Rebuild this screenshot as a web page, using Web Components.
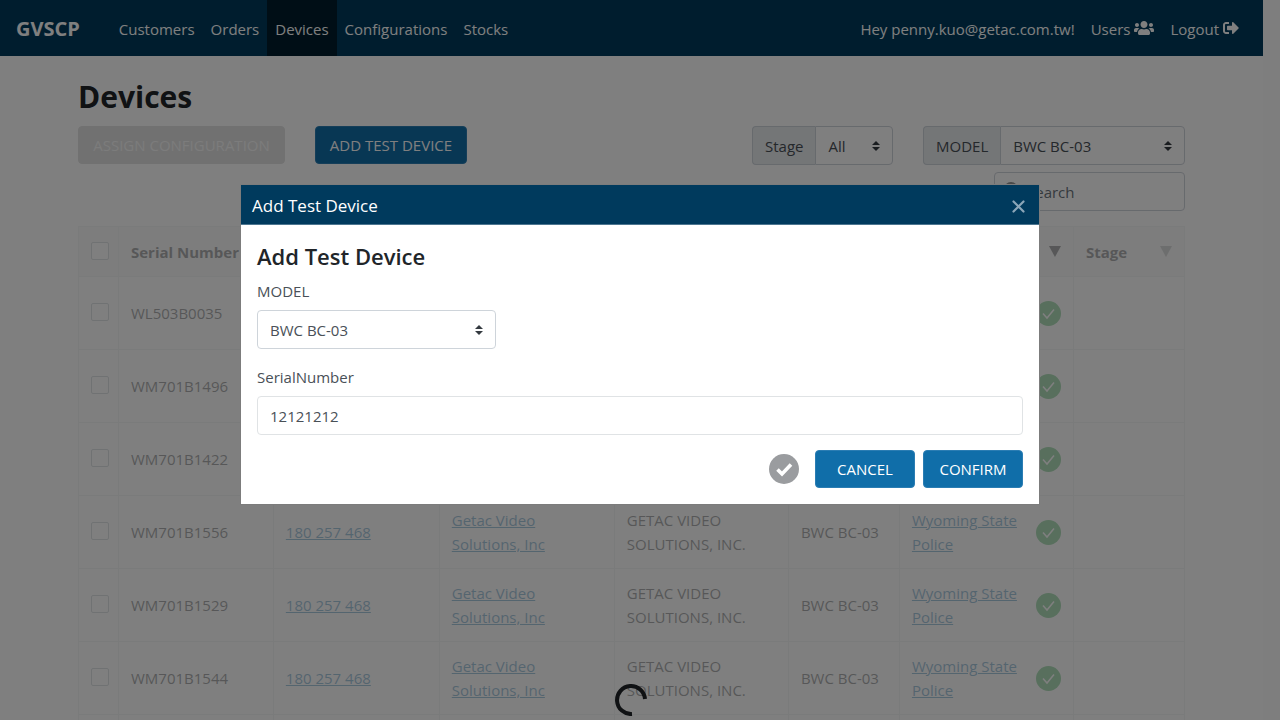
<!DOCTYPE html>
<html lang="en">
<head>
<meta charset="utf-8">
<title>GVSCP - Devices</title>
<style>
  html, body { margin: 0; height: 100%; overflow: hidden; }
  body {
    font: 15px/24px "Open Sans", "Noto Sans", sans-serif;
    color: #495057;
    background: #fff;
  }
</style>
</head>
<body>
<gv-app></gv-app>

<script>
const define = (name, html, setup) => {
  const template = document.createElement('template');
  template.innerHTML = '<style>*,*::before,*::after{box-sizing:border-box}</style>' + html;
  customElements.define(name, class extends HTMLElement {
    connectedCallback() {
      if (this.shadowRoot) return;
      const root = this.attachShadow({ mode: 'open' });
      root.append(template.content.cloneNode(true));
      if (setup) setup(this, root);
    }
  });
};

define('gv-nav-link', `
  <style>
    :host { display: flex; }
    a { display: flex; align-items: center; gap: 4px; padding: 2px 8px 0; color: #fff; text-decoration: none; white-space: nowrap; }
    :host([active]) a { background: #001c2c; }
  </style>
  <a href="#"><slot></slot></a>`);

define('gv-navbar', `
  <style>
    :host { display: block; }
    header { display: flex; height: 56px; padding: 0 16px; background: #003a5d; color: #fff; }
    .brand { display: flex; align-items: center; padding-top: 2px; margin-right: 31px; font-size: 20px; font-weight: 700; color: #fff; text-decoration: none; }
    nav { display: flex; }
    .right { margin-left: auto; }
    .hey { display: flex; align-items: center; padding: 2px 8px 0; }
    svg { display: block; fill: #fff; margin-top: -2px; }
  </style>
  <header>
    <a class="brand" href="#">GVSCP</a>
    <nav>
      <gv-nav-link>Customers</gv-nav-link>
      <gv-nav-link>Orders</gv-nav-link>
      <gv-nav-link active>Devices</gv-nav-link>
      <gv-nav-link>Configurations</gv-nav-link>
      <gv-nav-link>Stocks</gv-nav-link>
    </nav>
    <nav class="right">
      <span class="hey">Hey penny.kuo@getac.com.tw!</span>
      <gv-nav-link>Users
        <svg width="20" height="16" viewBox="0 0 640 512"><path d="M96 224c35.300 0 64-28.700 64-64s-28.700-64-64-64-64 28.700-64 64 28.700 64 64 64zm448 0c35.300 0 64-28.700 64-64s-28.700-64-64-64-64 28.700-64 64 28.700 64 64 64zm32 32h-64c-17.600 0-33.500 7.100-45.100 18.600 40.300 22.100 68.900 62 75.100 109.400h66c17.700 0 32-14.300 32-32v-32c0-35.300-28.700-64-64-64zm-256 0c61.900 0 112-50.100 112-112S381.900 32 320 32 208 82.100 208 144s50.100 112 112 112zm76.800 32h-8.300c-20.800 10-43.900 16-68.500 16s-47.600-6-68.500-16h-8.300C179.600 288 128 339.600 128 403.200V432c0 26.500 21.500 48 48 48h288c26.500 0 48-21.500 48-48v-28.800c0-63.600-51.600-115.200-115.200-115.200zm-223.700-13.400C161.500 263.100 145.600 256 128 256H64c-35.300 0-64 28.700-64 64v32c0 17.700 14.300 32 32 32h65.900c6.300-47.400 34.900-87.300 75.200-109.400z"/></svg>
      </gv-nav-link>
      <gv-nav-link>Logout
        <svg width="16" height="16" viewBox="0 0 512 512"><path d="M497 273L329 441c-15 15-41 4.500-41-17v-96H152c-13.300 0-24-10.700-24-24v-96c0-13.300 10.700-24 24-24h136V88c0-21.400 25.900-32 41-17l168 168c9.300 9.400 9.300 24.600 0 34zM192 436v-40c0-6.600-5.400-12-12-12H96c-17.700 0-32-14.300-32-32V160c0-17.700 14.300-32 32-32h84c6.600 0 12-5.400 12-12V76c0-6.600-5.400-12-12-12H96c-53 0-96 43-96 96v192c0 53 43 96 96 96h84c6.600 0 12-5.400 12-12z"/></svg>
      </gv-nav-link>
    </nav>
  </header>`);

define('gv-button', `
  <style>
    :host { display: block; }
    button { width: 100%; height: 38px; padding: 0 11px; border: 1px solid #2b7db3; border-radius: 4px; background: #106ea9; color: #fff; font: inherit; white-space: nowrap; }
    button:disabled { background: #e2e2e2; border-color: #e2e2e2; color: #f8f8f8; }
  </style>
  <button type="button"><slot></slot></button>`, (host, root) => {
    root.querySelector('button').disabled = host.hasAttribute('disabled');
  });

define('gv-select', `
  <style>
    :host { display: flex; height: 39px; }
    label { display: flex; align-items: center; padding: 0 12px; border: 1px solid #ced4da; border-right: 0; border-radius: 4px 0 0 4px; background: #e9ecef; }
    label:empty { display: none; }
    select {
      flex: 1; min-width: 0; appearance: none; padding: 0 28px 0 12px; border: 1px solid #ced4da; border-radius: 4px;
      font: inherit; color: #495057;
      background: #fff url("data:image/svg+xml,%3csvg xmlns='http://www.w3.org/2000/svg' viewBox='0 0 4 5'%3e%3cpath fill='%23343a40' d='M2 0L0 2h4zm0 5L0 3h4z'/%3e%3c/svg%3e") no-repeat right 12px center / 8px 10px;
    }
    label:not(:empty) + select { border-radius: 0 4px 4px 0; }
  </style>
  <label for="s"></label><select id="s"><option></option></select>`, (host, root) => {
    const text = host.getAttribute('label');
    if (text) root.querySelector('label').textContent = text;
    else root.querySelector('select').setAttribute('aria-label', host.getAttribute('name'));
    root.querySelector('option').textContent = host.getAttribute('value');
  });

define('gv-search', `
  <style>
    :host { display: grid; height: 39px; }
    input { grid-area: 1 / 1; width: 100%; min-width: 0; border: 1px solid #ced4da; border-radius: 4px; padding: 0 12px 0 32px; background: none; font: inherit; color: #495057; }
    input::placeholder { color: #6c757d; opacity: 1; }
    svg { grid-area: 1 / 1; align-self: center; margin: 0 0 2px 10px; }
  </style>
  <svg width="18" height="18" viewBox="0 0 18 18" fill="none" stroke="#909090" stroke-width="2"><circle cx="7" cy="7" r="6"/><path d="M11 11l6 6"/></svg>
  <input type="search" placeholder="Search" aria-label="Search">`);

define('gv-toolbar', `
  <style>
    :host { display: block; }
    .row { display: flex; gap: 30px; align-items: flex-start; }
    .spacer { flex: 1; }
    .add { width: 152px; } .assign { width: 207px; }
    .stage { width: 141px; } .model { width: 262px; }
    .find { width: 191px; margin: 7px 0 0 auto; }
  </style>
  <div class="row">
    <gv-button class="assign" disabled>ASSIGN CONFIGURATION</gv-button>
    <gv-button class="add">ADD TEST DEVICE</gv-button>
    <span class="spacer"></span>
    <gv-select class="stage" label="Stage" value="All"></gv-select>
    <gv-select class="model" label="MODEL" value="BWC BC-03"></gv-select>
  </div>
  <gv-search class="find"></gv-search>`);

define('gv-status', `
  <style>:host { display: block; flex: none; } svg { display: block; }</style>
  <svg width="25" height="25" viewBox="0 0 25 25"><circle cx="12.500" cy="12.500" r="12.500" fill="#28a745"/><path d="M7 12.500l4 4.500 7-8.500" fill="none" stroke="#fff" stroke-width="1.500"/></svg>`);

define('gv-device-table', `
  <style>
    :host { display: block; opacity: .36; }
    table { width: 100%; table-layout: fixed; border-collapse: collapse; color: #212529; }
    th, td { border: 1px solid #e6e8ea; padding: 0 12px; text-align: left; vertical-align: middle; }
    tr { height: 73px; }
    thead tr { height: 50px; background: #f2f2f2; }
    th { font-weight: 700; white-space: nowrap; }
    a { color: #106ea9; text-decoration: underline; }
    input { appearance: none; display: block; width: 18px; height: 18px; margin: 0 0 2px; border: 1px solid #adb5bd; border-radius: 2px; background: #fff; }
    .split { display: flex; align-items: center; justify-content: space-between; }
    .split gv-status { margin-left: auto; }
    .sort { width: 12px; height: 11px; background: #212529; clip-path: polygon(0 0, 100% 0, 50% 100%); margin-left: auto; }
    .idle { opacity: .4; }
  </style>
  <table>
    <colgroup>
      <col style="width:40px"><col style="width:14%"><col style="width:15%"><col style="width:175px">
      <col style="width:174px"><col style="width:111px"><col style="width:174px"><col style="width:111px">
    </colgroup>
    <thead><tr>
      <th><input type="checkbox" aria-label="Select all"></th><th>Serial Number</th><th></th><th></th><th></th><th></th>
      <th><div class="sort"></div></th><th><div class="split">Stage<div class="sort idle"></div></div></th>
    </tr></thead>
    <tbody></tbody>
  </table>`, (host, root) => {
    const full = ['<a href="#">180 257 468</a>', '<a href="#">Getac Video Solutions, Inc</a>', 'GETAC VIDEO SOLUTIONS, INC.', 'BWC BC-03', '<a href="#">Wyoming State Police</a>'];
    const blank = ['', '', '', '', ''];
    const rows = [
      ['WL503B0035', blank], ['WM701B1496', blank], ['WM701B1422', blank],
      ['WM701B1556', full], ['WM701B1529', full], ['WM701B1544', full], ['', blank]
    ];
    root.querySelector('tbody').innerHTML = rows.map(([serial, c]) => `<tr>
      <td><input type="checkbox" aria-label="Select ${serial}"></td><td>${serial}</td>
      <td>${c[0]}</td><td>${c[1]}</td><td>${c[2]}</td><td>${c[3]}</td>
      <td><div class="split">${c[4]}<gv-status></gv-status></div></td><td></td></tr>`).join('');
  });

define('gv-spinner', `
  <style>:host { display: block; } svg { display: block; }</style>
  <svg width="32" height="32" viewBox="0 0 32 32" fill="none" stroke="#212529" stroke-width="4" role="img" aria-label="Loading"><path d="M17 30A14 14 0 1 1 30 15"/></svg>`);

define('gv-modal', `
  <style>
    :host { position: fixed; inset: 0; display: flex; align-items: center; justify-content: center; padding-bottom: 31px; background: rgba(0,0,0,.5); }
    section { width: 800px; max-width: 100%; border: 1px solid #7c7c7c; background: #fff; }
    header { display: flex; align-items: center; justify-content: space-between; height: 40px; padding: 3px 14px 0 11px; background: #003a5d; color: #fff; font-size: 17px; border-bottom: 1px solid #4d7690; }
    header button { display: flex; padding: 0; border: 0; background: none; }
    .body { padding: 16px; }
  </style>
  <section role="dialog" aria-label="Add Test Device">
    <header><slot name="title"></slot>
      <button type="button" aria-label="Close"><svg width="13" height="13" viewBox="0 0 13 13" stroke="#8ba6b8" stroke-width="2.200" stroke-linecap="round"><path d="M1.500 1.500l10 10M11.500 1.500l-10 10"/></svg></button>
    </header>
    <div class="body"><slot></slot></div>
  </section>`);

define('gv-add-device', `
  <style>
    :host { display: block; }
    h2 { margin: 0 0 8px; font-size: 22px; line-height: 30px; font-weight: 600; color: #212529; }
    .label { display: block; margin-bottom: 7px; }
    .model { width: 239px; margin-bottom: 16px; }
    input { display: block; width: 100%; height: 39px; padding: 0 12px; border: 1px solid #e0e3e5; border-radius: 4px; font: inherit; color: #495057; }
    footer { display: flex; align-items: center; justify-content: flex-end; gap: 8px; margin-top: 15px; }
    footer svg { margin-right: 8px; }
    gv-button { width: 100px; }
  </style>
  <h2>Add Test Device</h2>
  <span class="label">MODEL</span>
  <gv-select class="model" name="MODEL" value="BWC BC-03"></gv-select>
  <label class="label" for="sn">SerialNumber</label>
  <input id="sn" type="text" value="12121212">
  <footer>
    <svg width="30" height="30" viewBox="0 0 30 30"><circle cx="15" cy="15" r="15" fill="#9a9c9f"/><path d="M8.500 15.500l4.500 4.500 9-9.500" fill="none" stroke="#fff" stroke-width="3.600"/></svg>
    <gv-button>CANCEL</gv-button>
    <gv-button>CONFIRM</gv-button>
  </footer>`);

define('gv-app', `
  <style>
    :host { display: grid; grid-template-columns: minmax(0, 1fr) 17px; height: 100vh; overflow: hidden; }
    .page { overflow: hidden; }
    .track { background: #fcfcfc; }
    main { max-width: 1107px; margin: 0 auto; }
    h1 { margin: 0; padding: 21px 0 9px; font-size: 30px; line-height: 40px; font-weight: 700; color: #212529; }
    gv-device-table { margin-top: 15px; }
    gv-spinner { position: absolute; left: 50%; bottom: 4px; margin-left: -25px; }
  </style>
  <div class="page">
    <gv-navbar></gv-navbar>
    <main>
      <h1>Devices</h1>
      <gv-toolbar></gv-toolbar>
      <gv-device-table></gv-device-table>
    </main>
    <gv-spinner></gv-spinner>
  </div>
  <div class="track"></div>
  <gv-modal><span slot="title">Add Test Device</span><gv-add-device></gv-add-device></gv-modal>`);
</script>
</body>
</html>
